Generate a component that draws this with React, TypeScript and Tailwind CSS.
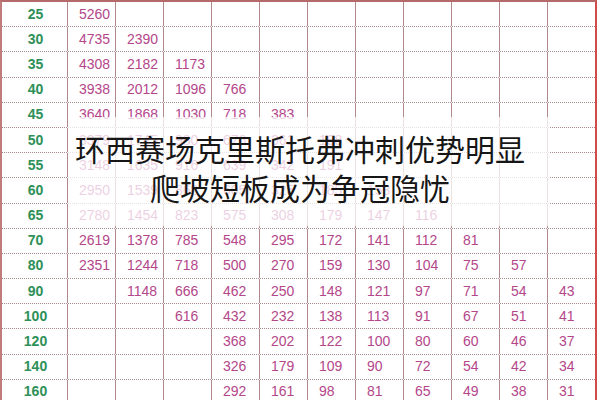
const rows: { label: number; values: (number | null)[] }[] = [
  { label: 25, values: [5260] },
  { label: 30, values: [4735, 2390] },
  { label: 35, values: [4308, 2182, 1173] },
  { label: 40, values: [3938, 2012, 1096, 766] },
  { label: 45, values: [3640, 1868, 1030, 718, 383] },
  { label: 50, values: [3379, 1745, 980, 676, 361, 198] },
  { label: 55, values: [3148, 1635, 916, 639, 342, 191] },
  { label: 60, values: [2950, 1539, 868, 605, 325, 185, 153] },
  { label: 65, values: [2780, 1454, 823, 575, 308, 179, 147, 116] },
  { label: 70, values: [2619, 1378, 785, 548, 295, 172, 141, 112, 81] },
  { label: 80, values: [2351, 1244, 718, 500, 270, 159, 130, 104, 75, 57] },
  { label: 90, values: [null, 1148, 666, 462, 250, 148, 121, 97, 71, 54, 43] },
  { label: 100, values: [null, null, 616, 432, 232, 138, 113, 91, 67, 51, 41] },
  { label: 120, values: [null, null, null, 368, 202, 122, 100, 80, 60, 46, 37] },
  { label: 140, values: [null, null, null, 326, 179, 109, 90, 72, 54, 42, 34] },
  { label: 160, values: [null, null, null, 292, 161, 98, 81, 65, 49, 38, 31] },
];

const COLS = 11;

export default function App() {
  return (
    <div className="relative h-[400px] w-[600px] overflow-hidden bg-white font-['Liberation_Sans_Narrow','Liberation_Sans',Arial,sans-serif]">
      <div className="w-[597px] border-t-2 border-l-2 border-r-2 border-t-[#b46a6a] border-l-[#c07c7c] border-r-[#d04a4a]">
        {rows.map((row) => (
          <div
            key={row.label}
            className="flex h-[25.2px] border-b border-dotted border-[#a88a8a]"
          >
            <div className="flex w-[66px] shrink-0 items-center justify-center border-r border-[#b08a8a] pl-[2px] text-[14px] font-bold text-[#2e9058]">
              {row.label}
            </div>
            {Array.from({ length: COLS }).map((_, i) => (
              <div
                key={i}
                className={
                  i === COLS - 1
                    ? "flex w-[47px] shrink-0 items-center pl-[11px] text-[14px] text-[#b4468a]"
                    : "flex w-[48px] shrink-0 items-center border-r border-[#b08a8a] pl-[11px] text-[14px] text-[#b4468a]"
                }
              >
                {row.values[i] ?? ""}
              </div>
            ))}
          </div>
        ))}
      </div>

      {/* faded band behind the headline */}
      <div className="absolute left-[68px] top-[117px] h-[109px] w-[481px] bg-white/75" />

      <div className="absolute left-0 top-[129px] w-[600px] text-center font-['Noto_Sans_CJK_SC',sans-serif] text-[30px] leading-[38.5px] text-[#161616]">
        <p>环西赛场克里斯托弗冲刺优势明显</p>
        <p>爬坡短板成为争冠隐忧</p>
      </div>
    </div>
  );
}
